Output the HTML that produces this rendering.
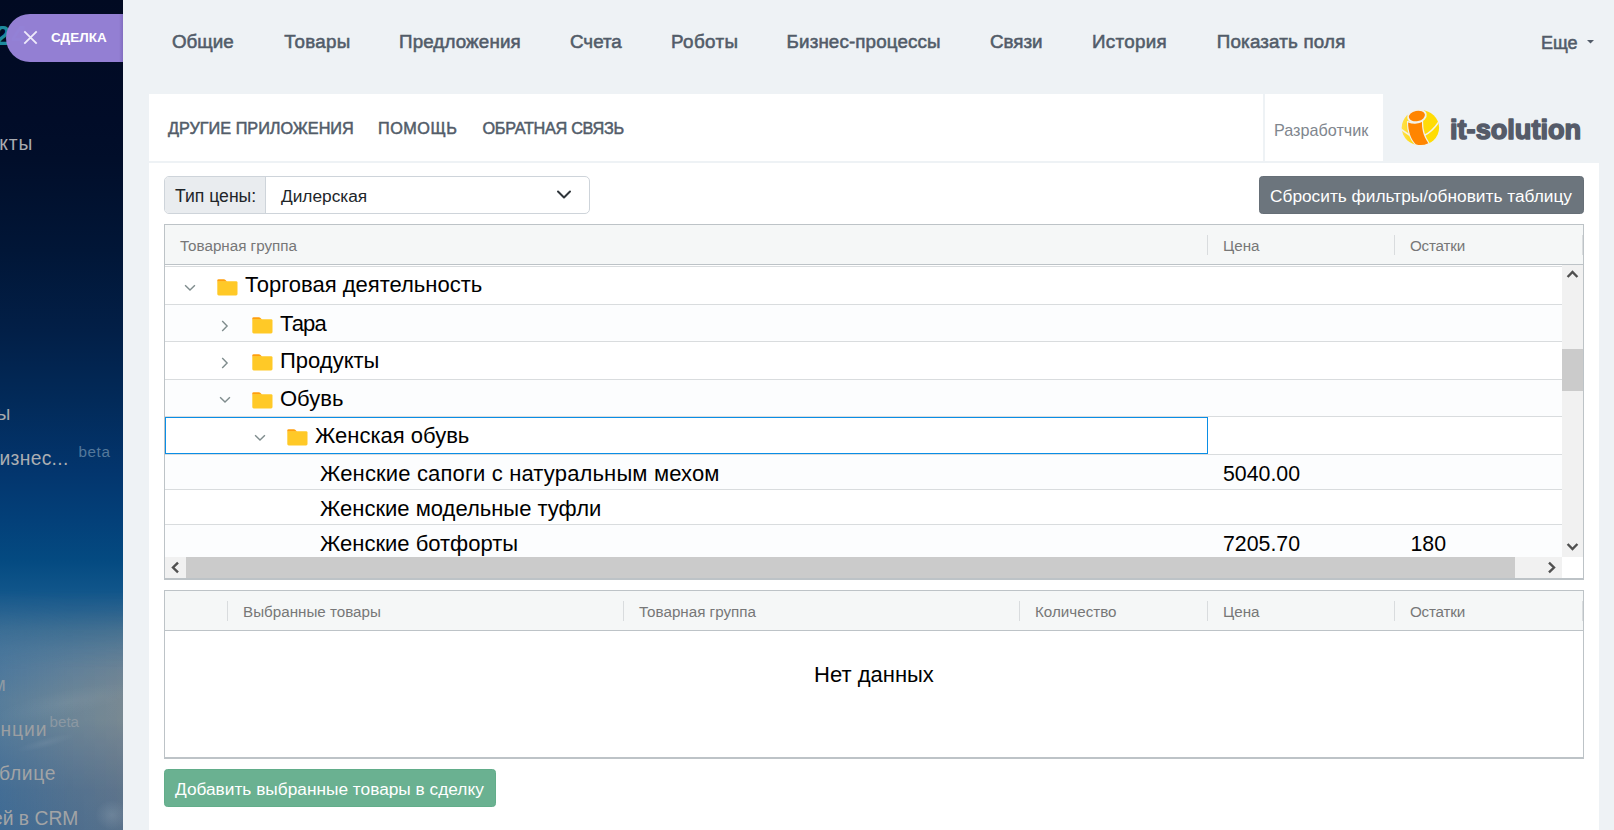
<!DOCTYPE html>
<html lang="ru">
<head>
<meta charset="utf-8">
<title>Сделка</title>
<style>
*{box-sizing:border-box;margin:0;padding:0}
html,body{width:1614px;height:830px;overflow:hidden}
body{font-family:"Liberation Sans",sans-serif;background:#eef2f5;position:relative;color:#000}
.abs{position:absolute;white-space:nowrap}
/* ---------- sidebar ---------- */
#side{left:0;top:0;width:123px;height:830px;overflow:hidden;
 background:linear-gradient(180deg,#010a22 0,#010c28 120px,#010e2a 160px,#011637 250px,#021f47 330px,#022a59 400px,#03356d 470px,#034079 520px,#044a81 560px,#10558a 590px,#27618e 610px,#427092 630px,#577b97 650px,#698398 670px,#778a96 700px,#768995 720px,#6c8092 745px,#5a738d 790px,#536f8c 830px)}
#side .t{position:absolute;white-space:nowrap;color:#a9abb0;font-size:19.3px;line-height:22px}
#side .beta{position:absolute;white-space:nowrap;font-size:15.2px;line-height:18px}
#tab{left:6px;top:14px;width:117px;height:48px;background:linear-gradient(90deg,rgba(0,0,0,0) 113px,rgba(40,20,90,.16) 117px),rgba(149,129,214,.985);border-radius:24px 0 0 24px}
#tab b{position:absolute;left:45px;top:15px;font-size:13.5px;line-height:18px;color:#fff;font-weight:bold}
/* ---------- top nav ---------- */
.nav{top:31px;font-size:18.8px;line-height:22px;color:#525c69;-webkit-text-stroke:.55px #525c69}
/* ---------- app header ---------- */
#hdr{left:149px;top:94px;width:1114px;height:67px;background:#fff}
#dev{left:1265px;top:94px;width:118px;height:67px;background:#fff}
.hl{top:119px;font-size:16.25px;line-height:19px;color:#525c69;-webkit-text-stroke:.5px #525c69}
#panel{left:149px;top:163px;width:1450px;height:667px;background:#fff}
/* ---------- controls ---------- */
#ig{left:164px;top:176px;width:426px;height:38px;border:1px solid #ced4da;border-radius:5px;background:#fff;overflow:hidden}
#ig .lab{position:absolute;left:0;top:0;width:101px;height:36px;background:#e9ecef;border-right:1px solid #ced4da}
.ct{font-size:17.3px;line-height:20px;color:#212529}
.btn{border-radius:3.5px;color:#fff;font-size:17.3px;line-height:20px}
/* ---------- grids ---------- */
.grid{border:1px solid #bdc3c7;background:#fff;overflow:hidden}
.gh{position:absolute;left:0;top:0;right:0;height:40px;background:#f5f7f7;border-bottom:1px solid #bdc3c7}
.gh span{position:absolute;top:12px;font-size:15.2px;line-height:18px;color:#777;white-space:nowrap}
.gh i{position:absolute;top:10px;width:1px;height:20px;background:#d9dcde}
.row{position:absolute;left:0;width:1397px;border-top:1px solid #d9dcde;background:#fff}
.row.o{background:#fcfdfe}
.row span{position:absolute;font-size:22px;line-height:26px;white-space:nowrap;color:#000}
.row svg{position:absolute}
.row span.n{font-size:21.3px}
</style>
</head>
<body>
<!-- SIDEBAR -->
<div id="side" class="abs">
  <div class="abs" style="left:0;top:590px;width:123px;height:240px;background:linear-gradient(90deg,rgba(25,100,165,.34),rgba(30,105,165,.12) 55%,rgba(140,135,125,.10));-webkit-mask-image:linear-gradient(180deg,transparent,#000 80px);mask-image:linear-gradient(180deg,transparent,#000 80px)"></div>
  <div class="abs" style="left:-10px;top:690px;width:150px;height:26px;border-radius:50%;background:radial-gradient(closest-side,rgba(255,255,255,.045),rgba(255,255,255,0));transform:rotate(-12deg)"></div>
  <div class="abs" style="left:15px;top:738px;width:60px;height:10px;border-radius:50%;background:radial-gradient(closest-side,rgba(255,255,255,.06),rgba(255,255,255,0));transform:rotate(-15deg)"></div>
  <div class="abs" style="left:95px;top:800px;width:34px;height:30px;border-radius:50%;background:radial-gradient(closest-side,rgba(255,255,255,.12),rgba(255,255,255,0))"></div>
  <div class="abs" style="left:-5px;top:19.5px;font-size:28px;line-height:32px;color:#1d8a9d;letter-spacing:1px;font-weight:bold">24</div>
  <div class="t" style="left:-0.8px;top:132.5px;letter-spacing:.9px">кты</div>
  <div class="t" style="left:-3.5px;top:402.5px;color:#a6a9ad">ы</div>
  <div class="t" style="left:-0.5px;top:447.5px;color:#abaeb2;letter-spacing:.3px">изнес...</div>
  <div class="beta" style="left:78.5px;top:442.5px;color:#54789b;letter-spacing:.6px">beta</div>
  <div class="t" style="left:-7.5px;top:673.5px;color:#8e9aa3">м</div>
  <div class="t" style="left:0.5px;top:718.5px;color:#9c9fa2;letter-spacing:.9px">нции</div>
  <div class="beta" style="left:49.5px;top:712.5px;color:#8b98a3">beta</div>
  <div class="t" style="left:-1px;top:763px;color:#a2a4a6;letter-spacing:.7px">блице</div>
  <div class="t" style="left:-8px;top:808px;color:#a2a4a6">ей в CRM</div>
</div>
<div id="tab" class="abs">
  <svg class="abs" style="left:17px;top:16px" width="15" height="15" viewBox="0 0 15 15"><path d="M1.3 1.3 L13.7 13.7 M13.7 1.3 L1.3 13.7" stroke="#eeeafa" stroke-width="1.85" fill="none"/></svg>
  <b>СДЕЛКА</b>
</div>

<!-- TOP NAV -->
<div class="abs nav" style="left:172px">Общие</div>
<div class="abs nav" style="left:284.3px;letter-spacing:.25px">Товары</div>
<div class="abs nav" style="left:399px;letter-spacing:.13px">Предложения</div>
<div class="abs nav" style="left:570px">Счета</div>
<div class="abs nav" style="left:671px;letter-spacing:.38px">Роботы</div>
<div class="abs nav" style="left:786.6px;letter-spacing:.12px">Бизнес-процессы</div>
<div class="abs nav" style="left:990px">Связи</div>
<div class="abs nav" style="left:1092px;letter-spacing:.3px">История</div>
<div class="abs nav" style="left:1216.8px;letter-spacing:.18px">Показать поля</div>
<div class="abs nav" style="left:1541px;font-size:18px;top:31.5px">Еще</div>
<svg class="abs" style="left:1587px;top:40px" width="7" height="4" viewBox="0 0 7 4"><path d="M0 0 H7 L3.5 3.6 Z" fill="#525c69"/></svg>

<!-- APP HEADER -->
<div id="hdr" class="abs"></div>
<div id="dev" class="abs"></div>
<div class="abs hl" style="left:168px">ДРУГИЕ ПРИЛОЖЕНИЯ</div>
<div class="abs hl" style="left:378px;letter-spacing:.5px">ПОМОЩЬ</div>
<div class="abs hl" style="left:482.5px;letter-spacing:-.3px">ОБРАТНАЯ СВЯЗЬ</div>
<div class="abs" style="left:1274px;top:121px;font-size:16.2px;line-height:19px;color:#80868e">Разработчик</div>

<!-- LOGO -->
<svg class="abs" style="left:1396px;top:104px" width="50" height="48" viewBox="0 0 50 48">
  <defs>
    <linearGradient id="lg" x1="0" y1="0" x2="1" y2="0"><stop offset="0" stop-color="#ffe04a"/><stop offset=".3" stop-color="#ffd912"/><stop offset="1" stop-color="#ffdd00"/></linearGradient>
    <clipPath id="ball"><ellipse cx="24.4" cy="23.7" rx="18.7" ry="17.6"/></clipPath>
  </defs>
  <ellipse cx="24.4" cy="23.7" rx="18.7" ry="17.6" fill="url(#lg)"/>
  <g clip-path="url(#ball)" fill="none" stroke="#f5f2e4" stroke-width="1.7">
    <path d="M4 24.6 Q9 28.2 13.4 31"/>
    <path d="M27.6 31.8 Q36 28 43 17.6"/>
  </g>
  <path d="M12.1 18.4 Q19 21 26 18.1 C25.9 24 26.6 31 32.3 39.2 Q26 42.4 19.7 40.2 C15 35 12 27 12.1 18.4Z" fill="#ff8500" stroke="#f4f2e8" stroke-width="2.3" paint-order="stroke"/>
  <ellipse cx="20.95" cy="12" rx="8.1" ry="5.2" transform="rotate(-12 20.95 12)" fill="#ff8500" stroke="#f1f2ee" stroke-width="3.6" paint-order="stroke"/>
</svg>
<svg class="abs" id="logot" style="left:1445px;top:106px" width="145" height="44" viewBox="0 0 145 44"><text x="5" y="33.3" font-family="Liberation Sans, sans-serif" font-weight="bold" font-size="28" fill="#555b69" stroke="#555b69" stroke-width="1.55" stroke-linejoin="round" textLength="131.2" lengthAdjust="spacingAndGlyphs">it-solution</text></svg>

<!-- CONTENT PANEL -->
<div id="panel" class="abs"></div>

<!-- CONTROLS -->
<div id="ig" class="abs"><div class="lab"></div></div>
<div class="abs ct" style="left:175px;top:185.6px;font-size:17.6px">Тип цены:</div>
<div class="abs ct" style="left:281px;top:186px">Дилерская</div>
<svg class="abs" style="left:556px;top:188.6px" width="16" height="12" viewBox="0 0 16 12"><path d="M2 2.5 L8 8.5 L14 2.5" stroke="#2f353a" stroke-width="2" fill="none" stroke-linecap="round" stroke-linejoin="round"/></svg>
<div class="abs btn" style="left:1259px;top:176px;width:325px;height:37.6px;background:#6c757d;border:1px solid #666f77"></div>
<div class="abs btn" style="left:1270px;top:186px">Сбросить фильтры/обновить таблицу</div>

<!-- GRID 1 -->
<div id="g1" class="abs grid" style="left:164px;top:224px;width:1420px;height:356px;border-bottom-width:2px">
  <div class="gh">
    <span style="left:15px">Товарная группа</span>
    <i style="left:1042px"></i><span style="left:1058px">Цена</span>
    <i style="left:1229px"></i><span style="left:1245px;letter-spacing:-.2px">Остатки</span>
    <i style="left:1417px"></i>
  </div>
  <div id="rows">
    <div class="row" style="top:41px;height:38px"><svg style="left:19px;top:16.6px" width="12" height="8" viewBox="0 0 12 8"><path d="M1.1 1.2 L6 6.1 L10.9 1.2" stroke="#7f8c8d" stroke-width="1.4" fill="none"/></svg><svg style="left:51.5px;top:12px" width="21" height="17" viewBox="0 0 21 17"><path d="M1.6 0.3 H6.8 Q7.8 0.3 8.5 1 L10.2 2.8 H0.3 V1.6 Q0.3 0.3 1.6 0.3Z" fill="#ff9f0e"/><path d="M0.3 3.6 Q0.3 2.2 1.7 2.2 H19.1 Q20.5 2.2 20.5 3.6 V15 Q20.5 16.4 19.1 16.4 H1.7 Q0.3 16.4 0.3 15Z" fill="#ffc927"/></svg><span style="left:80px;top:5px;">Торговая деятельность</span></div>
    <div class="row o" style="top:79px;height:37px"><svg style="left:55.6px;top:15px" width="8" height="12" viewBox="0 0 8 12"><path d="M1.2 1.1 L6.1 6 L1.2 10.9" stroke="#7f8c8d" stroke-width="1.4" fill="none"/></svg><svg style="left:86.5px;top:12px" width="21" height="17" viewBox="0 0 21 17"><path d="M1.6 0.3 H6.8 Q7.8 0.3 8.5 1 L10.2 2.8 H0.3 V1.6 Q0.3 0.3 1.6 0.3Z" fill="#ff9f0e"/><path d="M0.3 3.6 Q0.3 2.2 1.7 2.2 H19.1 Q20.5 2.2 20.5 3.6 V15 Q20.5 16.4 19.1 16.4 H1.7 Q0.3 16.4 0.3 15Z" fill="#ffc927"/></svg><span style="left:115px;top:6px;letter-spacing:-.8px">Тара</span></div>
    <div class="row" style="top:116px;height:38px"><svg style="left:55.6px;top:15px" width="8" height="12" viewBox="0 0 8 12"><path d="M1.2 1.1 L6.1 6 L1.2 10.9" stroke="#7f8c8d" stroke-width="1.4" fill="none"/></svg><svg style="left:86.5px;top:12px" width="21" height="17" viewBox="0 0 21 17"><path d="M1.6 0.3 H6.8 Q7.8 0.3 8.5 1 L10.2 2.8 H0.3 V1.6 Q0.3 0.3 1.6 0.3Z" fill="#ff9f0e"/><path d="M0.3 3.6 Q0.3 2.2 1.7 2.2 H19.1 Q20.5 2.2 20.5 3.6 V15 Q20.5 16.4 19.1 16.4 H1.7 Q0.3 16.4 0.3 15Z" fill="#ffc927"/></svg><span style="left:115px;top:6px;">Продукты</span></div>
    <div class="row o" style="top:154px;height:37px"><svg style="left:54px;top:16px" width="12" height="8" viewBox="0 0 12 8"><path d="M1.1 1.2 L6 6.1 L10.9 1.2" stroke="#7f8c8d" stroke-width="1.4" fill="none"/></svg><svg style="left:86.5px;top:12px" width="21" height="17" viewBox="0 0 21 17"><path d="M1.6 0.3 H6.8 Q7.8 0.3 8.5 1 L10.2 2.8 H0.3 V1.6 Q0.3 0.3 1.6 0.3Z" fill="#ff9f0e"/><path d="M0.3 3.6 Q0.3 2.2 1.7 2.2 H19.1 Q20.5 2.2 20.5 3.6 V15 Q20.5 16.4 19.1 16.4 H1.7 Q0.3 16.4 0.3 15Z" fill="#ffc927"/></svg><span style="left:115px;top:6px;">Обувь</span></div>
    <div class="row" style="top:191px;height:38px"><svg style="left:89px;top:17px" width="12" height="8" viewBox="0 0 12 8"><path d="M1.1 1.2 L6 6.1 L10.9 1.2" stroke="#7f8c8d" stroke-width="1.4" fill="none"/></svg><svg style="left:121.5px;top:12px" width="21" height="17" viewBox="0 0 21 17"><path d="M1.6 0.3 H6.8 Q7.8 0.3 8.5 1 L10.2 2.8 H0.3 V1.6 Q0.3 0.3 1.6 0.3Z" fill="#ff9f0e"/><path d="M0.3 3.6 Q0.3 2.2 1.7 2.2 H19.1 Q20.5 2.2 20.5 3.6 V15 Q20.5 16.4 19.1 16.4 H1.7 Q0.3 16.4 0.3 15Z" fill="#ffc927"/></svg><span style="left:150px;top:6px;">Женская обувь</span></div>
    <div class="row o" style="top:229px;height:35px"><span style="left:155px;top:6px; letter-spacing:.15px;">Женские сапоги с натуральным мехом</span><span class="n" style="left:1058px;top:6px">5040.00</span></div>
    <div class="row" style="top:264px;height:35px"><span style="left:155px;top:6px;">Женские модельные туфли</span></div>
    <div class="row o" style="top:299px;height:35px"><span style="left:155px;top:6px;">Женские ботфорты</span><span class="n" style="left:1058px;top:6px">7205.70</span><span class="n" style="left:1245.5px;top:6px">180</span></div>
    <div class="abs" style="left:0;top:192px;width:1043px;height:37px;border:1px solid #0a8ee6"></div>
    <!-- v scrollbar -->
    <div class="abs" style="left:1397px;top:40px;width:21px;height:292px;background:#f1f1f1"></div>
    <div class="abs" style="left:1397px;top:124px;width:21px;height:42px;background:#cbcbcb"></div>
    <svg class="abs" style="left:1401px;top:44px" width="13" height="10" viewBox="0 0 13 10"><path d="M1.6 8 L6.5 3 L11.4 8" stroke="#505050" stroke-width="2.4" fill="none"/></svg>
    <svg class="abs" style="left:1401px;top:317px" width="13" height="10" viewBox="0 0 13 10"><path d="M1.6 2 L6.5 7 L11.4 2" stroke="#505050" stroke-width="2.4" fill="none"/></svg>
    <!-- h scrollbar -->
    <div class="abs" style="left:0;top:332px;width:1397px;height:21px;background:#f1f1f1"></div>
    <div class="abs" style="left:21px;top:332px;width:1329px;height:21px;background:#cbcbcb"></div>
    <svg class="abs" style="left:5px;top:336px" width="10" height="13" viewBox="0 0 10 13"><path d="M8 1.6 L3 6.5 L8 11.4" stroke="#505050" stroke-width="2.4" fill="none"/></svg>
    <svg class="abs" style="left:1382px;top:336px" width="10" height="13" viewBox="0 0 10 13"><path d="M2 1.6 L7 6.5 L2 11.4" stroke="#505050" stroke-width="2.4" fill="none"/></svg>
  </div>
</div>

<!-- GRID 2 -->
<div id="g2" class="abs grid" style="left:164px;top:590px;width:1420px;height:169px;border-bottom-width:2px">
  <div class="gh">
    <i style="left:62px"></i><span style="left:78px">Выбранные товары</span>
    <i style="left:458px"></i><span style="left:474px">Товарная группа</span>
    <i style="left:854px"></i><span style="left:870px">Количество</span>
    <i style="left:1042px"></i><span style="left:1058px">Цена</span>
    <i style="left:1229px"></i><span style="left:1245px;letter-spacing:-.2px">Остатки</span>
    <i style="left:1417px"></i>
  </div>
  <div class="abs" style="left:0;right:0;top:71px;text-align:center;font-size:22px;line-height:26px">Нет данных</div>
</div>
<div class="abs btn" style="left:164px;top:769px;width:332px;height:37.6px;background:#6ab191;border:1px solid #62ad8a"></div>
<div class="abs btn" style="left:175px;top:779px">Добавить выбранные товары в сделку</div>

</body>
</html>
